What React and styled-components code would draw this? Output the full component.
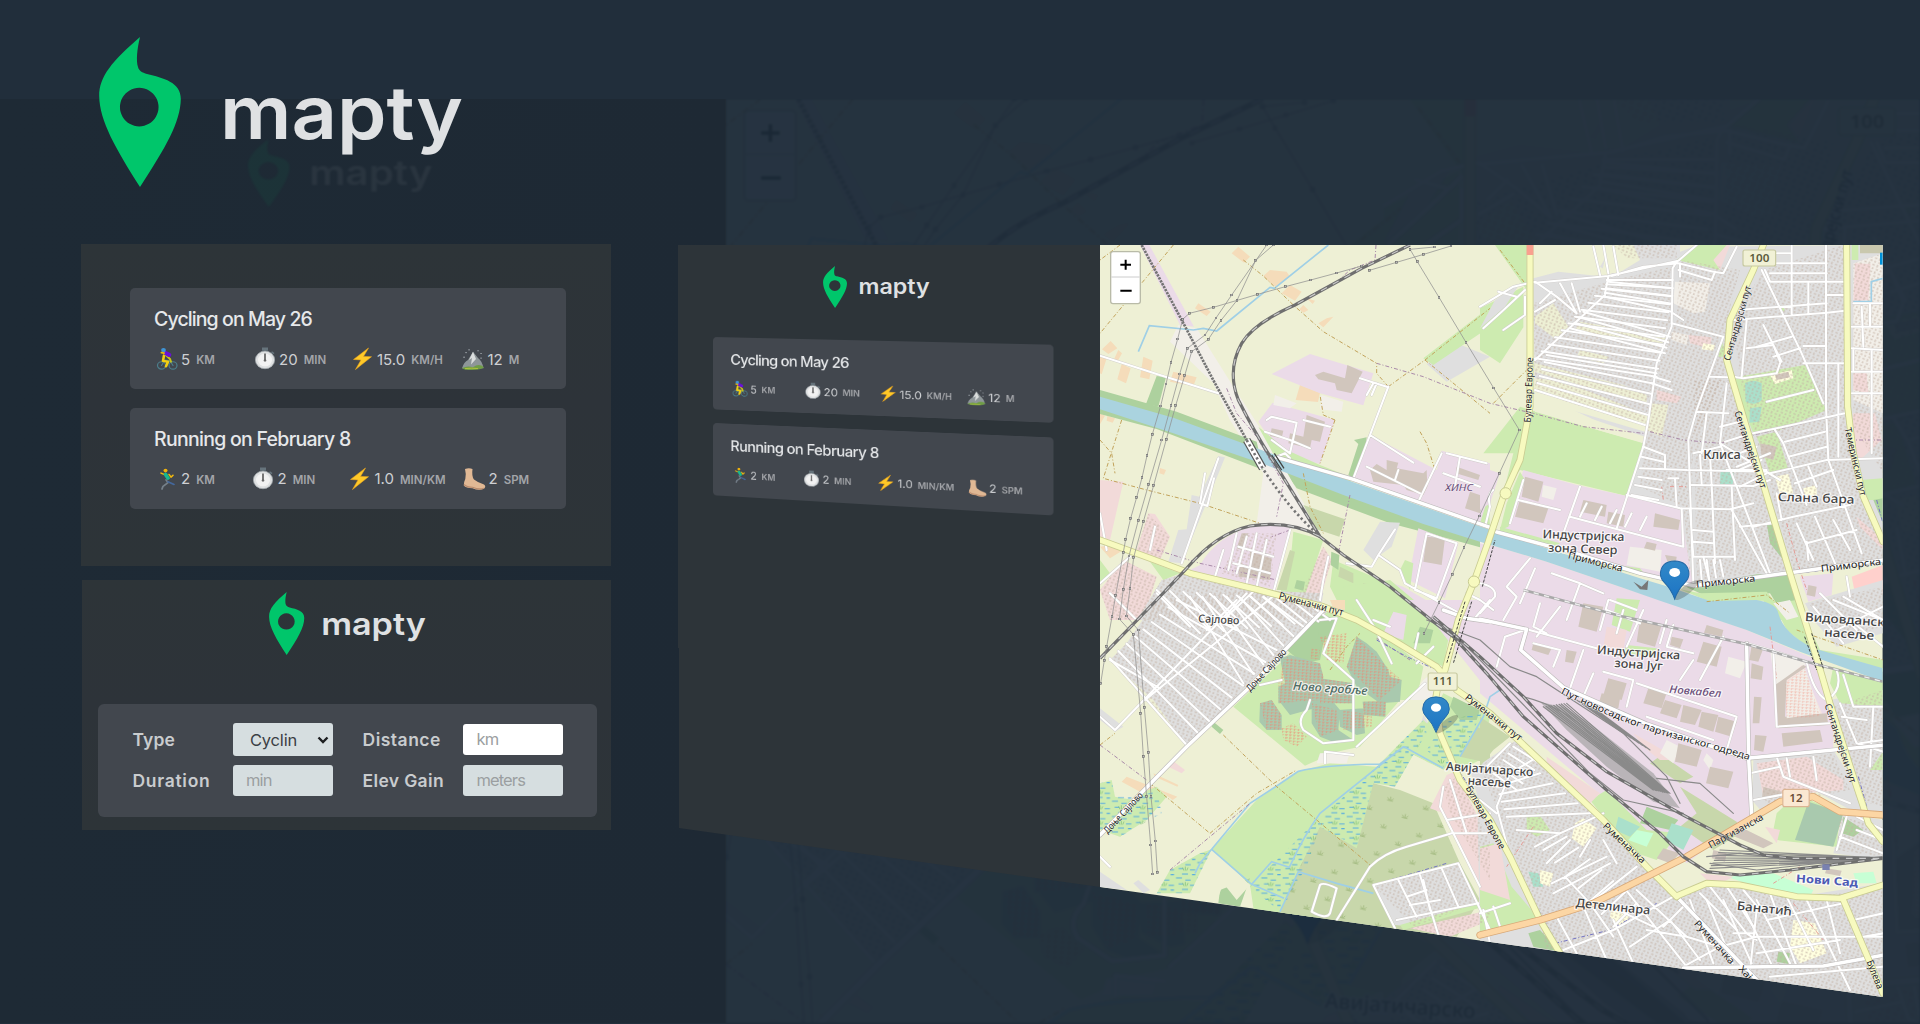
import React from 'react';
import styled, { createGlobalStyle } from 'styled-components';

const GlobalStyle = createGlobalStyle`
  * { box-sizing: border-box; }
  body { margin: 0; background: #212e3b; font-family: Inter, "Open Sans", sans-serif; }
`;

const Stage = styled.div`
  display: grid;
  grid-template: 1024px / 1920px;
  overflow: hidden;
  background: #212e3b;
`;

/* ---------- faded backdrop ---------- */
const Backdrop = styled.div`
  grid-area: 1 / 1;
  display: grid;
  grid-template-columns: 725.5px 1fr;
  margin-top: 99px;
  height: 924px;
  overflow: hidden;
  background: #1c2a38;
`;
const BackdropSide = styled.div`
  background: linear-gradient(90deg, #1e2a35, #1e2934);
  padding: 40px 0 0 248px;
`;
const BackdropLogo = styled.div`
  opacity: 0.06;
  filter: blur(0.8px);
  height: 68px;
`;
const BackdropMap = styled.div`
  overflow: hidden;
  opacity: 0.045;
  filter: blur(1px);
`;

/* ---------- foreground ---------- */
const Content = styled.main`
  grid-area: 1 / 1;
  display: flex;
  flex-direction: column;
  padding: 37px 37px 0 81px;
  z-index: 1;
`;
const Header = styled.header`
  height: 207px;
  padding-left: 18px;
`;
const Columns = styled.div`
  display: flex;
  align-items: flex-start;
  gap: 67px;
`;
const Previews = styled.section`
  width: 530px;
  display: flex;
  flex-direction: column;
  align-items: flex-end;
  gap: 14px;
`;
const Panel = styled.div`
  width: ${(p) => p.$width}px;
  height: ${(p) => p.$height}px;
  background: linear-gradient(#2d3438, #2d3339 50%, #2d3438);
  padding: ${(p) => p.$pad};
  display: flex;
  flex-direction: column;
`;
const PanelLogo = styled.div`
  height: 63px;
  padding-left: 171px;
`;
const List = styled.div`
  width: 436px;
  display: flex;
  flex-direction: column;
  gap: 18.6px;
`;
const TiltedList = styled(List)`
  transform-origin: 0 0;
  transform: matrix3d(0.72388, 0.01651, 0, -0.00016766, 0, 0.7163, 0, 0, 0, 0, 1, 0, 0, 0, 0, 1);
`;
const Card = styled.article`
  height: 101.4px;
  border-radius: 5px;
  background: #42474e;
  padding: 20px 0 0 24px;
`;
const Title = styled.h2`
  margin: 0;
  font-size: 19.5px;
  line-height: 23px;
  font-weight: 500;
  letter-spacing: ${(p) => p.$track}px;
  color: #e6e8ea;
  white-space: nowrap;
`;
const Stats = styled.div`
  display: grid;
  grid-template-columns: ${(p) => p.$cols};
  margin-top: 16px;
  height: 24px;
`;
const Stat = styled.div`
  display: flex;
  align-items: center;
  white-space: nowrap;
  svg { width: 22px; height: 22px; flex: none; overflow: visible; margin-left: 1.5px; }
`;
const Value = styled.span`
  margin-left: 3.5px;
  font-size: 15px;
  color: #ced0d3;
`;
const Unit = styled.span`
  margin-left: 6px;
  padding-top: 2px;
  font-size: 11.5px;
  font-weight: 600;
  color: #a3a5a9;
`;

const FormCard = styled.form`
  width: 499px;
  height: 113px;
  border-radius: 6px;
  background: #42474e;
  padding: 19.5px 34px 0 34.5px;
  display: grid;
  grid-template-columns: 100px 130px 100.5px 100px;
  grid-template-rows: 33px 31px;
  row-gap: 9px;
  margin-top: 48.5px;
`;
const Label = styled.label`
  font-size: 17.5px;
  font-weight: 600;
  color: #c9ccce;
  align-self: center;
  letter-spacing: ${(p) => p.$track}px;
  white-space: nowrap;
`;
const Field = styled.div`
  width: 100px;
  height: 30.5px;
  align-self: center;
  border-radius: 3px;
  background: ${(p) => (p.$active ? '#ffffff' : '#d6dee0')};
  color: #9b9fa1;
  font-size: 16.5px;
  line-height: 30px;
  letter-spacing: -0.9px;
  padding-left: 13.5px;
`;
const Select = styled.div`
  width: 100px;
  height: 33px;
  border-radius: 3px;
  background: #d6dee0;
  color: #3b4044;
  font-size: 16.5px;
  letter-spacing: -0.2px;
  display: flex;
  align-items: center;
  justify-content: space-between;
  padding: 0 4px 0 17.5px;
`;

const Showcase = styled.section`
  width: 1205px;
  height: 753px;
  margin-top: 1px;
  display: flex;
  clip-path: polygon(0 0, 1204.6px 0, 1204.6px 752px, 422px 642px, 1px 583px, 1px 403px, 0 403px);
`;
const Sidebar = styled.aside`
  width: 422px;
  height: 753px;
  background: #2d3439;
  padding: 21px 0 0 35px;
`;
const SidebarLogo = styled.div`
  height: 71px;
  padding-left: 110px;
`;
const MapFrame = styled.div`
  width: 783px;
  height: 752px;
`;
const MapSvg = styled.svg`
  display: block;
  width: ${(p) => p.$w}px;
  height: ${(p) => p.$h}px;
  font-family: "Noto Sans", "Open Sans", sans-serif;
`;
const LogoSvg = styled.svg`
  display: block;
  width: ${(p) => p.$w}px;
  height: ${(p) => p.$h}px;
  overflow: visible;
  font-family: Inter, "Open Sans", sans-serif;
`;

function Logo({ w, h }) {
  return (
    <LogoSvg $w={w} $h={h} viewBox="0 0 363 150" preserveAspectRatio="none">
      <path
        fill="#00c66b"
        fillRule="evenodd"
        d="M41 0C38 12 37 24 39 30C40 34 43 35.5 48 37C64 41 82 45 81.8 62C81.5 85 67 110 41 150C17 112 .5 84 .2 59C0 40 13 24 41 0ZM40.2 50.8A19.3 19.3 0 1 0 40.3 50.8Z"
      />
      <text x="121" y="101.5" fontSize="74" fontWeight="600" fill="#dfe1e3" textLength="243" lengthAdjust="spacingAndGlyphs">mapty</text>
    </LogoSvg>
  );
}

/* ---------- activity icons ---------- */
const ICONS = {
  bike: (
    <g fill="none" strokeLinecap="round" strokeLinejoin="round">
      <g stroke="#4c7f8c" strokeWidth="1.2">
        <circle cx="5.5" cy="19" r="4" /><circle cx="17" cy="19" r="4" />
        <path d="M5.5 19L9 13L14 14L17 19M10 19L14 14" />
      </g>
      <path d="M8 8L7 14L12 15L10 20" stroke="#f2cf12" strokeWidth="2.600" />
      <path d="M9 7L14 12L15 15" stroke="#c7c417" strokeWidth="2" />
      <path d="M9.5 5.5L13 7.5" stroke="#6a10d8" strokeWidth="4.500" />
      <circle cx="7.5" cy="2.3" r="2.400" fill="#3f94d6" />
      <path d="M5.500 5L8 5.500" stroke="#e7b80d" strokeWidth="2" />
    </g>
  ),
  run: (
    <g fill="none" strokeLinecap="round" strokeLinejoin="round">
      <path d="M10 13L12 16L7 20L6 23" stroke="#75808a" strokeWidth="1.800" />
      <path d="M12 15L18 18" stroke="#44689c" strokeWidth="1.800" />
      <path d="M8 7L5 5.500M13 7L15 10L17 8" stroke="#f2b90c" strokeWidth="1.600" />
      <path d="M9.500 7L12 11" stroke="#17b890" strokeWidth="3.800" />
      <circle cx="9.500" cy="2.800" r="2" fill="#efb20c" />
    </g>
  ),
  watch: (
    <g>
      <path d="M8 -.5h6v3.500h-6zM18 3.500l2.500 2l-1 1.300l-2.500-2z" fill="#66747c" />
      <circle cx="11" cy="13" r="9.600" fill="#dfe1e2" stroke="#a4aaae" strokeWidth=".8" />
      <circle cx="11" cy="13" r="7" fill="#f2f2f2" />
      <path d="M11 6v8" stroke="#686868" strokeWidth="1.800" />
      <circle cx="11" cy="13.500" r="1.300" fill="#686868" />
    </g>
  ),
  bolt: <path d="M16.500 0L1.500 12.500L9 13L3.500 23.500L19.500 9.500L11.500 9.200Z" fill="#ffc928" stroke="#f0a81c" strokeWidth=".6" />,
  peak: (
    <g>
      <path d="M0 22Q2 15 6 13L11 4L16 11Q20 14 21.500 22Z" fill="#8e9699" />
      <path d="M11 4L7 13L10 11L9 18L14 12Z" fill="#dadddd" />
      <path d="M0 22Q5 19 11 21Q17 16 22 21Q19 24 10 24Q2 24 0 22Z" fill="#6f9d46" />
      <path d="M3 22.500Q10 21.500 16 22.500" stroke="#b3c33c" fill="none" />
      <path d="M4 5h.1M7 2h.1M16 3h.1M19 6h.1M2 10h.1M19 11h.1" stroke="#c3cbd0" strokeWidth="1.200" strokeLinecap="round" />
    </g>
  ),
  foot: (
    <g>
      <path d="M2 1Q6 -.5 9.500 1Q8.500 9 11 12.500Q15 16 21 18Q23.500 20 21 22.500Q16 25 9.500 22Q3 22 .8 19Q.5 16 2.300 12Q3.500 7 2 1Z" fill="#e0b894" />
      <path d="M1 18Q4 21 9.500 21Q16 24 21 22" stroke="#b98b6d" strokeWidth="1.200" fill="none" />
    </g>
  ),
};

const WORKOUTS = [
  {
    title: 'Cycling on May 26', track: -0.9, cols: '98px 98px 110.5px 1fr',
    stats: [['bike', '5', 'KM'], ['watch', '20', 'MIN'], ['bolt', '15.0', 'KM/H'], ['peak', '12', 'M']],
  },
  {
    title: 'Running on February 8', track: -0.72, cols: '96.5px 97px 114px 1fr',
    stats: [['run', '2', 'KM'], ['watch', '2', 'MIN'], ['bolt', '1.0', 'MIN/KM'], ['foot', '2', 'SPM']],
  },
];

const Workouts = () =>
  WORKOUTS.map((w) => (
    <Card key={w.title}>
      <Title $track={w.track}>{w.title}</Title>
      <Stats $cols={w.cols}>
        {w.stats.map(([icon, value, unit]) => (
          <Stat key={icon}>
            <svg viewBox="0 0 22 24" preserveAspectRatio="none">{ICONS[icon]}</svg>
            <Value>{value}</Value>
            <Unit>{unit}</Unit>
          </Stat>
        ))}
      </Stats>
    </Card>
  ));

/* ---------- map: four tiles, 3 units per pixel ---------- */
const TILES = { A: 'translate(0 0)', B: 'translate(1170 0)', C: 'translate(0 1080)', D: 'translate(1170 1080)' };

const hatch = (a, b, c, d, n) => {
  let out = '';
  for (let i = 0; i <= n; i += 1) {
    const t = i / n;
    const m = (p, q) => `${(p[0] + (q[0] - p[0]) * t).toFixed(0)} ${(p[1] + (q[1] - p[1]) * t).toFixed(0)}`;
    out += `M${m(a, b)}L${m(c, d)}`;
  }
  return out;
};

const FARM = '#eef0d5', GRASS = '#cdebb0', WOOD = '#add19e', IND = '#ebdbe8', RES = '#dfdfdf', WATER = '#aad3df';
const PINK = '#f2dad9', ORANGE = '#f5dcba', SCRUB = '#c8d7ab', BARE = '#f2efe9', BLDG = '#d1c6bd', PITCH = '#aae0cb', YEL = '#ffffe0';

const LAND = {
  A: [
    [IND, 'M150 15H178L312 260L270 255Z'],
    [BARE, 'M265 255L320 265L430 440L560 640L690 880L500 850L520 700L420 540L370 430L240 305Z'],
    [ORANGE, 'M445 20L480 50L462 68L425 40ZM540 90L590 95L600 110L555 140L520 108ZM600 135L635 155L615 182L575 160ZM325 190L362 215L350 228L315 205ZM710 235L730 230L700 262L685 250ZM62 303L82 325L55 342L36 328ZM30 350L50 355L35 403L30 400ZM85 330L96 340L82 365L72 358ZM160 350L188 362L178 418L150 412ZM95 372L122 385L108 430L82 418ZM250 395L320 412L310 438L240 425ZM630 435L690 458L684 486L617 480ZM30 520L45 527L30 553ZM52 528L75 535L68 548L50 542ZM210 684L228 690L222 704L208 700ZM650 175L675 182L668 192ZM640 195L655 210L640 218L628 208ZM30 920L80 912L100 930L60 955Z'],
    [WOOD, 'M200 408L228 412L205 500L168 492ZM792 600L830 592L828 612L795 720L775 705L805 612Z'],
    [IND, 'M545 402L660 342L850 400L820 496L690 460ZM548 488L735 540L690 672L570 640L505 545ZM840 585L1040 690L1055 632L1200 670V800L1190 855L790 715ZM330 975Q380 890 480 862Q560 850 600 865L555 1050L300 990ZM985 865L1105 910L1065 1075L955 1020ZM850 1010L940 1040L1110 1140H1030Z'],
    [PINK, 'M30 720L100 725L60 900L30 890ZM175 820L195 822L240 890L210 960L140 930ZM700 920L725 960L690 1080L620 1080ZM30 1050L100 960L200 1010L160 1140H60Z'],
    [RES, 'M385 648L405 652L345 800L275 970L235 965L265 870L290 868L305 765L328 770ZM1100 310L1200 350L1070 425L1010 372ZM870 845L930 848L905 920L850 960L820 930ZM215 1020L300 995L560 1060L720 1110L700 1140H140Z'],
    [GRASS, 'M505 560L590 630L690 675L790 715L780 730L560 660ZM1000 355L1200 200V260L1030 375ZM610 875L700 900L640 1080L570 1060L600 980ZM730 960L850 1010L1000 1110L1010 1140H770L720 1040ZM180 965L270 1000L220 1020ZM945 960L970 970L960 1050L930 990ZM1195 770L1200 860L1170 850ZM30 960L60 1000L30 1030Z'],
    [SCRUB, 'M640 795L765 838L748 890L680 868ZM600 930L615 935L590 1050L560 1050Z'],
    [BARE, 'M555 465L620 490L600 505L550 495ZM695 465L760 485L755 515L690 508Z'],
    [BLDG, 'M675 405L700 395L765 415L772 375L818 395L785 460L740 450L735 430L685 418ZM650 525L705 545L690 605L665 600L660 625L595 610L600 580L640 590ZM545 565L580 572L575 595L540 588ZM890 660L925 668L920 685L1000 700L1010 690L1012 740L1000 765L950 750L940 735L850 725L840 690L860 672L890 690ZM1100 680L1170 705L1165 720L1098 700ZM1140 755L1185 770L1170 820L1125 805ZM1010 890L1065 895L1055 975L1000 965ZM455 880L475 880L455 930L440 925ZM480 935L545 955L540 1020L445 1010L450 970L480 980Z'],
    [SCRUB, 'M750 980L790 1000L790 1030L745 1010ZM820 1030L845 1035L825 1090L790 1110Z'],
    [WOOD, 'M724 935L748 945L745 990L722 975ZM620 1020L645 1025L640 1052L613 1045Z'],
  ],
  B: [
    [GRASS, 'M45 15H140V150ZM0 205L130 140V262L60 370L0 330ZM10 640L120 500L300 555L490 608L440 768L120 690L70 760L100 640Z'],
    [RES, 'M45 180L120 130L75 200L0 265ZM160 115L235 95L390 112L485 80L640 20L1209 15V970L930 1000L640 1035L600 810L440 770L490 610L165 455L160 180Z'],
    [RES, 'M400 15H600V60L410 110L360 80Z'],
    [FARM, 'M385 15H460L480 60L415 100L365 100ZM300 245L560 290L540 320L285 270ZM300 330L385 350L370 370L290 350ZM165 370L430 435L500 465V495L165 395ZM165 415L215 420L330 455L505 525L495 575L240 500L165 470ZM165 480L495 590L490 610L165 515ZM510 490L565 495L545 590L500 570ZM165 230L220 190L265 260L230 300L165 250Z'],
    [BARE, 'M585 125L690 130L675 215L640 220L580 190ZM575 275L625 285L620 315L575 300Z'],
    [PINK, 'M680 20L750 15L720 90L700 70ZM625 285L695 292L690 325L630 310ZM530 450L605 470L590 490L530 480ZM1120 520L1185 520L1205 600L1140 660L1110 600ZM1130 830L1209 900L1209 930L1140 860ZM655 1030L700 1030L700 1060L650 1060Z'],
    [GRASS, 'M590 60L650 15L740 15L700 60L720 90ZM775 410L975 375L1005 440L1040 510L900 570L820 580L780 480L760 420ZM830 590L890 575L925 690L870 700L850 640ZM725 305L745 350L715 350ZM905 195L915 210L905 220ZM1115 15H1135V60H1115ZM1140 720L1209 715V780H1165Z'],
    [PITCH, 'M795 430Q820 415 845 430V480Q825 500 797 485ZM810 505L845 500L838 545L808 548ZM722 688L762 688L758 733L720 733ZM900 712L920 712L922 745L905 750Z'],
    [YEL, 'M670 310L705 315L700 332L665 328ZM870 405L935 390L940 415L885 432ZM885 710L925 702L940 760L900 765ZM970 745L1010 735L1010 765L975 770Z'],
    [IND, 'M130 690L290 735L440 768L600 805L640 1035L350 960L60 875L90 830ZM0 905L200 965L420 1040L720 1140H0ZM960 1010L1060 1000L1055 1065L985 1085ZM0 680L60 700L30 790L0 810Z'],
    [GRASS, 'M120 695L135 720L85 860L60 870L80 790ZM20 950L110 980L60 1030L0 1010ZM430 1085L490 1100L460 1140H410ZM60 860L240 910L220 925L60 885ZM310 960L480 985L500 1010L290 960Z'],
    [BARE, 'M450 920L545 930L540 995L440 975ZM190 735L230 745L220 780L185 770ZM0 870L30 880L20 950L0 960Z'],
    [BLDG, 'M135 710L190 725L175 785L125 770ZM118 785L205 805L190 850L105 830ZM310 780L380 795L375 830L300 815ZM385 815L435 825L430 860L380 850ZM500 905L530 912L525 932L492 925ZM150 1005L215 1035L195 1090L130 1060ZM325 1075L395 1095L380 1140H305ZM555 945L590 950L585 990L570 985ZM885 405L925 395L930 412L890 420ZM840 610L890 620L880 660L845 650ZM985 1035L1010 1040L1005 1070L980 1065ZM525 820L600 840L595 870L520 860Z'],
    [WOOD, 'M620 1042L830 1003L930 1000L968 1140H920L870 1060L700 1078ZM1180 780L1209 775V850ZM860 850L885 850L890 900L910 960L870 910Z'],
    [GRASS, 'M600 1048L660 1060L860 1055L930 1140H890L850 1082L690 1085Z'],
    ['#c9c8ae', 'M1140 15H1209V40H1140Z'],
    [BARE, 'M1120 70L1209 40V520L1120 480Z'],
    [PINK, 'M1125 70L1172 72L1165 180L1120 185ZM1120 400L1160 400L1165 460L1120 450Z'],
    ['#ffd0cc', 'M1115 1010L1209 975V1060L1130 1085Z'],
  ],
  C: [
    [RES, 'M205 -10L480 -30L700 -20L690 40L290 440L190 300L60 180L110 130Z'],
    [RES, 'M30 325L100 380L75 395L30 360ZM30 815L110 870L30 862ZM1000 345L1030 395L1045 410L1015 440L970 430L985 400ZM1140 510L1200 480V720ZM145 840L180 870L160 880L130 850Z'],
    [ORANGE, 'M110 530L262 590L248 600L200 565L175 580L150 575L95 545ZM190 520L265 555L262 560L195 530ZM720 0H765V30L730 25Z'],
    [GRASS, 'M580 180L680 60L720 30L800 60L900 120L1000 200L980 300L930 300L810 440L740 455L645 497L430 320ZM760 -40L900 -60L1080 90L1060 200L900 115L800 50ZM620 515L720 490L860 500L830 700L650 990H500L480 855L365 748L500 600ZM1060 280L1200 350L1170 480L1130 500L1010 490L985 420ZM30 550L65 540L75 590L130 600L150 580L200 560L230 590L170 660L90 710L30 690Z'],
    [GRASS, 'M860 500L1000 360L1040 400L1100 470L1060 510L970 465L920 560L850 550L800 740L650 800L570 935L480 860L600 700ZM330 760L365 748L300 880L200 880L240 810Z'],
    [WOOD, 'M590 150L690 40L740 60L700 130L690 180L640 190ZM370 365L400 390L390 402L365 380ZM390 870L480 835L450 920L385 910ZM1090 290L1170 330L1160 360L1110 360L1080 320ZM990 80L1030 90L1020 130L970 130Z'],
    [FARM, 'M970 465L1060 510L1020 605L915 560ZM370 750L480 855L440 900L400 850L380 905L310 880Z'],
    [FARM, 'M820 440L1000 270L1020 290L870 470L820 470L640 500L810 465Z'],
    [SCRUB, 'M850 550L930 570L1030 610L1070 700L1110 790L1170 900L1100 1010L860 985L570 940L625 810L690 680L800 745Z'],
    [SCRUB, 'M1160 380L1200 400V490L1110 470Z'],
    [BARE, 'M1000 240L1040 210L1050 280L1000 300L960 300ZM690 460L780 455L770 490L680 490Z'],
    [IND, 'M910 35L950 45L940 120L880 100ZM1000 0H1200V280L1030 65L950 0Z'],
    [PINK, 'M1070 525L1095 515L1200 720V860L1175 870L1060 640L1020 625ZM245 480L285 510L275 520L235 500ZM960 985L1200 930V960L1080 1010Z'],
    [RES, 'M850 855L1105 790L1165 910L970 980L915 975Z'],
    [GRASS, 'M930 975L1160 910L1165 925L940 990Z'],
    ['#a9c9ae', 'M570 175L600 165L690 190L700 230L690 300L640 310L565 310V260L585 250ZM800 110L830 130L860 155L895 210L900 230L935 240L930 305L870 310L800 260L770 200ZM690 235L790 250V310H690ZM510 310L545 300L575 345L575 390L530 390L508 365ZM565 300H690V320L600 345ZM665 310L725 300L750 330L745 390L790 420L740 430L690 410L665 370ZM745 330L820 325L825 400L800 405L750 380ZM818 305L888 303L886 350L822 345Z'],
    [WOOD, 'M690 50L735 70L715 120L685 110Z'],
  ],
  D: [
    [IND, 'M0 -170L540 0L800 90L1000 175L1060 340V450L810 480L815 640L620 790L380 600L0 280Z'],
    [RES, 'M-10 500L110 420L370 665L510 800L590 890L690 850L950 890L1209 850V1200L0 1030Z'],
    [RES, 'M975 10L1209 -60V100L1070 140L1000 60ZM1050 300L1209 270V650L1130 640ZM820 480L1060 450L1130 560V640L1000 570L850 640L815 600ZM1090 640L1209 660V780L1060 760Z'],
    [GRASS, 'M880 10L950 0L1020 150L1209 180V215L1010 165L920 90ZM1060 200L1209 245V320L1080 310L1050 250ZM410 -5L480 0L450 95L395 75ZM440 135L530 145L520 170L430 160ZM890 640L910 620L990 600L1080 640L1070 740L890 720L880 690ZM330 600L380 570L500 690L600 700L530 780L470 760L370 650ZM0 740L40 730L95 860L180 960L0 1000ZM140 650L175 640L210 690L170 710L140 690ZM1209 455L1170 510H1209Z'],
    [SCRUB, 'M510 490L545 465L640 530L600 550ZM600 560L770 665L780 700L700 750L600 680L650 640ZM0 350L90 410L40 450L0 500Z'],
    [WOOD, 'M500 620L595 660L570 690L480 670ZM1090 650L1150 690L1120 710L1085 700ZM145 1000L180 990L240 1055L160 1040ZM895 1055L930 1060L925 1092L890 1085Z'],
    ['#a9c9ae', 'M985 605L1090 640L1060 740L945 720Z'],
    ['#c7ffd5', 'M740 830L880 820L1000 870L990 890L860 870ZM1120 820L1180 815L1190 850L1130 850ZM470 690L520 700L500 740L445 720Z'],
    [PITCH, 'M415 650L480 680L450 710L405 690ZM575 670L640 690L610 750L555 720ZM145 815L175 820L190 860L160 860ZM985 1010L1015 1010L1015 1060L990 1055Z'],
    [PINK, 'M0 745L60 730L90 900L0 870ZM200 470L360 580L320 620L200 510ZM460 400L600 480L540 480L490 440ZM830 490L980 470L1090 540V570L850 590ZM380 80L440 90L430 150L370 140ZM660 820L760 830L700 860ZM855 680L900 690L890 730Z'],
    [YEL, 'M285 670L310 655L350 685L310 740L275 715ZM940 960L1005 970L1040 1060L960 1090L930 1040ZM180 810L220 820L210 860L180 850ZM395 920L450 950L420 980L390 950Z'],
    [BARE, 'M870 150L980 190L890 290ZM745 170L800 185L780 235L735 220ZM560 420L600 440L580 490L540 460ZM680 460L700 480L690 510L670 480ZM880 10L930 0L955 50L920 60Z'],
    ['#f5e4df', 'M965 195L1030 350L920 360L915 240Z'],
    [BLDG, 'M970 195L980 200L920 240L915 350L1040 340L1045 375L895 385L885 255ZM310 10L370 20L350 95L295 80ZM480 60L545 75L525 140L470 125ZM670 125L725 140L710 200L650 185ZM385 235L440 250L425 300L370 285ZM365 280L420 295L415 325L355 315ZM260 150L290 155L280 190L255 185ZM505 265L560 278L545 325L490 310ZM555 300L605 315L590 355L540 340ZM610 315L665 330L645 375L600 365ZM665 335L715 345L700 395L655 380ZM715 350L770 365L755 410L705 395ZM595 430L665 450L650 500L585 485ZM690 500L760 515L745 565L678 550ZM815 135L850 145L835 185L808 180ZM815 190L850 200L845 240L812 235ZM822 290L845 292L838 370L818 370ZM825 405L860 408L850 455L822 450ZM160 130L215 145L205 165L155 150ZM575 110L610 118L600 145L570 135ZM680 75L730 90L725 110L672 98ZM905 400L1020 390L1028 425L910 440ZM700 750L740 760L735 785L695 775ZM550 745L600 760L570 790L530 775ZM780 680L880 730L850 745L765 710ZM850 560L905 575L900 590L845 600ZM1040 805L1085 812L1080 828L1035 820Z'],
    [BARE, 'M920 250L975 205L1020 340L920 355Z'],
  ],
};

/* residential blocks that carry the small-building texture */
const BLOCKS = {
  A: ['M215 1020L300 995L560 1060L720 1110L700 1140H140Z', 'M30 1050L100 960L200 1010L160 1140H60Z', 'M700 920L725 960L690 1080L620 1080Z', 'M175 820L240 890L210 960L140 930Z', 'M460 880L560 880L540 1040L390 1000Z'],
  B: ['M160 190L380 125L575 80L575 260L525 380L495 560L165 455Z', 'M600 60L780 90L740 240L740 400L640 600L630 1020L610 800L480 740L500 560L540 340L590 230Z', 'M850 90L1090 15L1100 560L1140 760L1209 910V960L940 990L870 740L780 420L760 240Z', 'M640 420L760 420L860 760L920 990L650 1020Z', 'M1120 70L1209 40V700L1120 560Z', 'M400 15H590V55H440Z'],
  C: ['M205 0L480 -30L700 -20L660 60L290 440L60 180L110 130Z', 'M1060 560L1100 530L1200 720V840L1080 640Z', 'M850 855L1105 790L1165 910L970 980Z', 'M960 985L1200 930V960L1080 1010Z'],
  D: ['M0 500L110 420L370 665L510 800L590 890L690 850L950 890L1209 870V1200L200 1060L180 960Z', 'M1060 320L1209 270V620L1130 600Z', 'M1080 650L1209 680V770L1070 750Z', 'M985 10L1209 -40V80L1080 120Z', 'M830 490L1060 460L1110 570L860 620Z'],
};

const MINOR = {
  A: [
    'M30 347L200 402L385 460M385 655L275 970M345 700L330 790L352 798L372 715M600 870L552 1050M915 868L865 945L845 980L770 970M865 945L930 990L945 1030L1100 1115M895 440L840 585L790 715M840 585L970 668M560 650L585 640L600 655M1055 640L985 785M1070 640L1190 670M1060 700L1170 740M1110 650L1095 740M530 540L545 530L620 548L600 640M640 540L720 560M525 575L600 600L660 625M545 600L600 640M810 415L890 440M850 430L830 465M860 430L845 465M400 930L375 1010M440 880L415 990M470 890L440 1000M500 880L470 1030M530 900L500 1040M445 920L550 950M430 970L540 1000M830 680L990 760M925 690L915 720M1010 880L1100 910L1040 1075L975 1050ZM715 950L700 1020L690 1080M195 860L180 930M30 820L50 930',
    hatch([200, 1050], [640, 1080], [330, 1180], [720, 1140], 11),
    'M500 1045L400 1140M440 1080L350 1170M30 1030L120 950M60 1060L140 1140M200 1060L300 1160',
  ],
  B: [
    'M0 200L100 140L165 125L230 170L290 220M165 128L385 108L595 62L650 15M375 165L165 360M385 110L375 160M590 65L578 85L575 260L530 370L505 540L490 620L410 865M395 108L490 80L595 70L700 95M700 95L730 100L770 20M595 90L695 120L705 95M600 70V110M290 220L240 130M275 130L300 215M340 20L360 105M370 15L385 100M400 20L415 105M10 265L65 215L135 150M70 270L135 225L135 170M165 215L225 180M180 190L215 155M55 155L110 170',
    hatch([385, 125], [165, 355], [578, 145], [530, 410], 11),
    hatch([200, 345], [165, 450], [530, 400], [495, 555], 5),
    hatch([380, 120], [375, 170], [578, 120], [575, 215], 4),
    hatch([310, 215], [270, 265], [570, 290], [555, 340], 3),
    'M575 250L730 290M580 220L610 240M520 410L570 425M515 430L575 450M730 290L650 510L625 600L640 1030M740 430L720 610L900 720M650 515L745 520M690 410L745 412M760 410L790 415L890 400L900 370M800 240L785 410M760 240L1040 218L1095 212M845 90L965 340L1030 490M770 210L1040 190M855 90L870 125H1095M870 100H1040M890 70H1040M935 15V225M985 130V220M1038 15V500L1045 660L1145 940M1040 165H1095M890 40H930M970 318H1038M830 320L935 290M850 255L905 365M880 350L960 325M800 325L880 315L900 365M970 370H1095M860 485L1000 450M1075 370V650M820 580L1095 520M885 570L910 610L980 795M915 605L1035 575M925 650L1040 620M870 700L1040 660M945 730L1060 690M985 680L1010 740M620 690L860 695M635 735L820 738L870 720M605 805L750 808L820 790M480 685L620 690M475 710L545 720M465 735L545 750M455 765L535 780M490 620L555 645V685M485 650L550 665M660 645L665 730M690 645L695 735M680 520L665 640M720 610L870 1000M720 620L640 640M740 690L860 690M770 680L870 640M695 735L705 970M755 740L765 960M640 870L700 875M640 905L700 910M640 950L760 950M820 860L940 830L1110 795M780 860L880 850M755 810L860 1000M905 840L890 760M980 910L1130 870M950 850L1000 960M1005 830L1065 970M1060 840L1110 930M985 960L980 905M670 950L690 1030M565 715H595M585 715L590 800M605 805L610 920M630 810L640 950M440 765L600 805M270 830L610 920M300 740L250 880M115 780L240 810M130 720L90 850M1120 190H1209M1145 200L1150 320M1170 190V260M1115 260H1209M1115 325L1209 330M1115 395H1209M1175 400V640M1115 460H1209M1040 660L1209 655M1120 325V390M1175 330V395M0 1030Q50 1040 45 1070L0 1120M40 750Q20 760 30 800L15 860M150 955L80 1040L110 1070L70 1140M165 985L120 1090M215 1000L300 1030L260 1140M300 1030L370 1060M390 1080L470 1110M1060 1080L1209 1140M1100 1010L1110 1070',
    hatch([720, 560], [780, 740], [800, 540], [860, 700], 4),
    hatch([660, 960], [720, 960], [665, 1020], [730, 1010], 3),
    hatch([320, 790], [500, 830], [300, 830], [480, 870], 4),
  ],
  C: [
    'M470 -20L75 390L30 350M560 -20L165 300M60 180L210 265M690 60L740 55L700 160L790 240L790 420L700 430L640 390Q620 360 650 330L660 300M800 440L1005 250M790 465L705 455V490M800 0L855 85L905 190M740 960L840 800Q880 760 950 740L1085 700M665 935L690 855Q700 845 740 865L720 940Q710 960 665 935M850 60L900 80M1060 560L1050 620L1100 720L1170 860M1070 660L1200 640M1090 700L1200 700M1080 540L1130 700M1150 60L1200 0M510 255L575 240M30 770L60 800M985 100L970 170M1030 140L980 190',
    hatch([60, 175], [260, 0], [290, 435], [560, 150], 8),
    hatch([300, -10], [520, -10], [460, 250], [640, 80], 6),
    'M850 855L915 985M925 840L980 950M990 825L1045 1005M1055 805L1105 920M1105 790L1200 990M850 855L1105 790M920 960L1165 910M950 890L1010 870M960 915L1050 900M1000 840L1020 930',
  ],
  D: [
    'M-40 -20L0 0L40 30M0 60L140 88L350 145M140 88L75 110L50 200M310 150L270 265M490 30L440 140M800 130L870 150L980 185L1015 190M880 150L890 380L1050 370M980 185Q1000 280 1040 300Q1090 270 1070 210M1080 310L1130 430L1209 455M1090 225L1120 320L1209 320M1085 350L1160 360M890 470L910 530L1110 610M920 475L930 530M1000 470L1010 540M810 520L900 500M820 600L930 580M160 130L240 150L220 200M385 0L360 90M430 30L410 100M560 60L540 130M580 75L560 140L640 160M640 180L600 240M730 110L660 240M470 250L770 350L740 450M340 220L310 290L350 320M370 215L460 240L440 320M380 30L480 70M500 350L700 420M180 10L160 80L200 100M240 20L170 110',
    'M50 640L0 600M165 475L90 520L50 620L90 770M90 430L20 500M240 700L370 640M165 740L240 700L110 690M200 790L270 720M215 850L380 770M220 880L390 790M255 830L330 910L400 1010M300 770L330 720M350 900L520 980M330 910L470 800M410 790L370 720M430 860L620 1100M470 870L620 1010M580 890L400 990L250 1050M620 910L550 980M450 1040L570 960L660 1080M230 950L290 1060M310 920L380 1080M400 960L460 1090M690 860L800 1000L830 1020M740 860L820 980M660 880L770 990M790 870L840 930M830 930L810 1110M760 1000L820 1000M870 880L950 1100M920 890L1000 1050M980 900L1110 1170M1040 900L1080 1060M860 960L1090 910M720 1040L830 1010L1209 1010M830 1060L1080 1020M1120 960L1209 940M1150 1010L1209 1000M610 1100L720 1040M10 930L30 1030M40 920L60 980M0 940L90 910M1100 650L1070 750M1130 690L1209 720M1080 710L1209 760M1130 650L1209 690M1000 20L1090 130M1020 -20L1130 90M1050 100L1209 20M1110 60L1209 140M1090 -10L1209 60M1180 320L1170 500M1140 430L1209 420M870 1130L1209 1100M500 990L620 1010L720 1040',
    hatch([100, 440], [40, 520], [180, 490], [110, 570], 4),
    hatch([50, 560], [80, 650], [180, 520], [330, 640], 4),
    hatch([190, 750], [400, 980], [260, 710], [470, 910], 6),
    hatch([630, 900], [830, 900], [700, 1090], [930, 1090], 4),
  ],
};

const MAJOR_WHITE = {
  A: ['M560 652L790 718L1200 862'],
  B: ['M50 876L280 938L480 1000L640 1037L830 1012L930 998L1209 960'],
  C: ['M30 705L290 440L470 270L700 30', 'M1060 30L1130 55L1200 65'],
  D: ['M0 58L140 88L122 150L250 262L500 372L800 475L1060 450L1209 436', 'M800 130L806 475L815 645', 'M590 890L840 1150', 'M610 1104L1030 1098L1209 1066'],
};
const YELLOW = [
  'M30 900L180 955L300 1000L500 1048L620 1080L700 1100L800 1140L900 1195L1040 1280L1100 1350L1200 1420L1285 1500L1370 1580L1540 1740L1670 1880L1760 1970',
  'M1320 15L1320 500L1290 660L1240 770L1195 905L1152 1025L1105 1140L1065 1290L1045 1330L1038 1370L1050 1480L1110 1620L1200 1740L1260 1850L1350 2040L1410 2140',
  'M2020 15L1990 90L1920 240L1910 360L1930 430L2040 800L2100 1000L2125 1080L2185 1270L2220 1390L2290 1610L2320 1700L2335 1750L2379 1805',
  'M2270 15L2273 500L2290 640L2320 770L2379 905',
  'M1760 1968L1850 1930L1950 1935L2120 1970L2250 1975L2379 1935',
  'M2258 1975L2379 2260',
];
const PRIMARY = 'M1170 2085L1350 2040L1510 1990L1680 1905L1790 1850L2070 1685L2170 1670L2250 1715L2379 1725';
const RAILS = [
  'M960 15L815 85L615 195Q490 250 455 310Q410 390 445 480Q500 590 560 680L690 890L760 945L900 1040L1030 1145L1090 1190L1190 1300L1300 1430L1550 1650L1710 1780L1780 1850L1850 1895L1950 1905L2100 1890L2379 1855',
  'M30 1255L200 1080L290 985Q380 880 480 858Q600 840 690 890',
  'M1030 1130L1170 1250L1300 1370L1400 1480L1550 1595L1770 1720L1950 1815L2020 1845L2110 1855L2379 1855',
];
const SIDINGS = [
  'M1010 1140L1170 1200L1260 1280L1340 1310L1600 1480L1730 1610L1770 1690M1100 1190L1170 1260L1500 1600L1600 1680L1780 1720M1300 1370Q1420 1400 1500 1480L1640 1580M1700 1615L1830 1630L1930 1720M1850 1850L1950 1840L2200 1870L2379 1850M1860 1870L2000 1890L2379 1850',
  hatch([1360, 1400], [1430, 1390], [1690, 1650], [1740, 1660], 9),
  hatch([1460, 1380], [1520, 1410], [1600, 1480], [1680, 1530], 7),
  hatch([1890, 1830], [1860, 1885], [2340, 1852], [2340, 1862], 7),
];
const POWER = [
  'M550 15L497 61L441 181L393 241L355 298L305 335L284 407L257 497L229 598L191 736L160 845L131 952L120 1046L109 1128L145 1170L163 1403L175 1537L183 1670L196 1803L202 1897',
  'M530 15L425 165L378 234L345 285L292 325L269 402L243 497L215 600L176 733L145 841L117 948L100 1048L88 1137L130 1183L152 1420L160 1550L170 1670L182 1815L188 1902',
  'M278 238L263 297L243 367L228 432L212 498L187 583L171 647L156 713L140 772L122 835L107 898L100 937L77 1066L66 1130L50 1220L43 1261L32 1330',
  'M278 238L298 220L370 202L503 163L586 140L662 120L740 99L815 78',
  'M838 91L920 67L1001 43L1083 18',
  'M960 28L1033 21', 'M960 28L982 65L1047 172L1128 307L1211 444L1288 570L1228 700L1168 828L1122 922L1087 1003L1047 1088L1002 1180',
];
const STREAMS = [
  'M145 335L178 257L310 270L340 265L380 273L540 142L553 145L715 15',
  'M2290 185H2344V125L2379 115',
  'M315 1900L330 1870L365 1828L480 1690L560 1638L625 1594Q700 1575 870 1572L942 1520L1060 1585M940 1520L690 1720Q640 1790 598 1882L545 1865L485 1933L365 1828M485 1933L582 1975M570 2015L625 1895L740 1930L850 1960M1110 1550L1180 1430L1200 1370L1230 1350',
];
const TRACKS = [
  ['#c2a35b', 'M250 15L30 280M90 15L30 60M460 60L520 108L610 195L700 275L860 370M895 440L1005 360L1200 205M895 440L860 400V370M735 540L700 525L690 465M735 540L690 670M990 575L1010 610L1035 690M95 540L40 715L170 750L330 790L510 850M640 700L660 800L700 880M1005 360L1200 520M30 600L65 640L75 700M30 1515L75 1480M400 1485L560 1640L680 1740L840 1875M360 1780L500 1660L620 1590M180 1630L360 1780M1210 490L1310 390M1230 30L1320 150M720 1290L770 1220L810 1180M1850 1085L2030 1065L2100 1120M2120 1170L2379 1260'],
  ['#a98aa9', 'M858 15L855 60L780 90L730 135M860 370L1000 410L1200 490L1330 520L1480 560L1660 580M410 445L440 520L500 590L580 730L560 830M780 765L745 940M600 870L545 890M200 930L330 970L560 1020M1680 575L1780 600L1890 610L1990 585L2270 520M30 1515L170 1620M240 1890L360 1790L480 1690M2280 600H2379M860 1195L960 1260'],
  ['#e59a94', 'M1715 740L1720 780M1740 740H1790M2010 700L2020 740M2090 850L2120 960L2150 1050M1330 1760L1250 1880M2050 1930L2130 1880M2110 1990L2200 2100M2040 1160L2060 1320'],
  ['#7474c2', 'M1395 2110L1560 2070L1700 1990M1040 1470L1100 1580L1200 1740L1340 2000L1400 2110M2305 1610L2330 1700M2120 1000L2200 990M850 1935L1070 1870M2360 780L2379 850M860 1200L950 1250L1030 1285'],
];

const NAMES = [
  // tile, x, y, angle, length, size, colour, text, style, shown in the backdrop
  ['A', 1107, 752, 0, 84, 29, '#6b4f7a', 'ХИНС', 'italic'],
  ['A', 661, 1102, 15, 200, 30, '#222', 'Руменачки пут'],
  ['B', 156, 450, -88, 195, 29, '#222', 'Булевар Европе'],
  ['B', 782, 252, -74, 232, 29, '#222', 'Сентандрејски пут', '', true],
  ['B', 802, 632, 71, 243, 29, '#222', 'Сентандрејски пут'],
  ['B', 1117, 667, 77, 208, 29, '#222', 'Темерински пут'],
  ['B', 726, 658, 0, 113, 36, '#444', 'Клиса'],
  ['B', 1008, 787, 2, 230, 36, '#444', 'Слана бара'],
  ['B', 310, 899, 2, 245, 36, '#444', 'Индустријска'],
  ['B', 308, 939, 2, 208, 36, '#444', 'зона Север'],
  ['B', 344, 975, 14, 168, 29, '#222', 'Приморска'],
  ['B', 738, 1034, -6, 178, 29, '#222', 'Приморска'],
  ['B', 1114, 985, -7, 182, 29, '#222', 'Приморска'],
  ['C', 386, 70, 3, 124, 33, '#444', 'Сајлово'],
  ['C', 720, 277, 4, 224, 35, '#4d6a62', 'Ново гробље', 'italic'],
  ['C', 536, 217, -47, 162, 29, '#222', 'Доње Сајлово'],
  ['C', 107, 645, -47, 157, 29, '#222', 'Доње Сајлово'],
  ['C', 1198, 520, 4, 262, 36, '#444', 'Авијатичарско', '', true],
  ['C', 1197, 558, 4, 130, 36, '#444', 'насеље'],
  ['C', 1205, 360, 38, 208, 29, '#222', 'Руменачки пут'],
  ['C', 1178, 657, 61, 213, 29, '#222', 'Булевар Европе'],
  ['D', 475, 170, 4, 250, 36, '#444', 'Индустријска'],
  ['D', 475, 206, 4, 145, 36, '#444', 'зона Југ'],
  ['D', 645, 285, 5, 156, 32, '#6b4f7a', 'Новкабел', 'italic'],
  ['D', 1094, 71, 4, 240, 36, '#444', 'Видовданск'],
  ['D', 1107, 114, 4, 150, 36, '#444', 'насеље'],
  ['D', 1072, 433, 72, 248, 29, '#222', 'Сентандрејски пут'],
  ['D', 772, 702, -29, 184, 29, '#222', 'Партизанска'],
  ['D', 426, 736, 43, 163, 29, '#222', 'Руменачка'],
  ['D', 398, 932, 6, 224, 36, '#444', 'Детелинара'],
  ['D', 852, 938, 6, 166, 36, '#444', 'Банатић'],
  ['D', 1040, 853, 4, 186, 33, '#4c5ab5', 'Нови Сад', 'bold'],
  ['D', 696, 1033, 48, 165, 29, '#222', 'Руменачка'],
  ['D', 789, 1125, 48, 46, 29, '#222', 'Хај'],
  ['D', 1176, 1127, 68, 90, 29, '#222', 'Булева'],
];
const SHIELDS = [
  [2008, 54, 98, 48, '100', '#f1f1d6', '#c7c9a0', '#5c5c3e'],
  [1058, 1325, 87, 52, '111', '#f1f1d6', '#c7c9a0', '#5c5c3e'],
  [2118, 1674, 79, 52, '12', '#fbe8d2', '#dcb493', '#6b4f38'],
];

const Tiles = ({ data, render }) =>
  Object.keys(data).map((k) => <g key={k} transform={TILES[k]}>{data[k].map(render)}</g>);

const CANAL = 'M30 470L250 533L520 632L760 716L1000 800L1200 870L1370 925L1650 1015L1740 1042L1860 1083L2000 1080Q2060 1090 2065 1120Q2080 1180 2170 1225L2379 1285V1325L2130 1235L1970 1170L1710 1082L1590 1040L1370 965L1170 905L1000 852L760 765L520 672L250 580L30 508Z';

function Marker({ x, y, s }) {
  return (
    <g transform={`translate(${x} ${y}) scale(${s})`}>
      <ellipse cx="34" cy="-26" rx="44" ry="13" fill="#333" opacity=".28" transform="rotate(-38 34 -26)" />
      <path d="M0 0Q-10 -28 -30 -48Q-42 -60 -42 -74Q-40 -111 0 -112Q40 -111 42 -74Q42 -60 30 -48Q10 -28 0 0Z" fill="url(#pinBlue)" stroke="#2569a6" strokeWidth="3" />
      <ellipse cy="-78" rx="16" ry="13" fill="#fff" />
    </g>
  );
}

function MapDrawing({ w, h, label, faded }) {
  const names = faded ? NAMES.filter((n) => n[9]) : NAMES;
  const shields = faded ? SHIELDS.slice(0, 1) : SHIELDS;
  return (
    <MapSvg $w={w} $h={h} viewBox="30 15 2349 2256" preserveAspectRatio="none" role="img" aria-label={label}>
      <defs>
        <pattern id="homes" width="26" height="21" patternUnits="userSpaceOnUse" patternTransform="rotate(22)">
          <path d="M1 2h7v5h-7zM14 1h5v7h-5zM3 13h5v5h-5zM16 13h7v4h-7z" fill="#c3b0a3" fillOpacity=".6" />
        </pattern>
        <pattern id="marsh" width="64" height="46" patternUnits="userSpaceOnUse">
          <path d="M2 6h18M30 12h16M10 24h14M44 28h16M20 40h18M50 42h10" stroke="#52a9e2" strokeWidth="3" />
          <path d="M30 30v-12M26 30l-4-9M34 30l4-9" stroke="#74b96c" strokeWidth="2" />
        </pattern>
        <pattern id="graves" width="12" height="9" patternUnits="userSpaceOnUse" patternTransform="rotate(4)">
          <path d="M0 2h9M3 2v5" stroke="#f2836f" strokeWidth="1.600" />
        </pattern>
        <pattern id="tufts" width="110" height="84" patternUnits="userSpaceOnUse" patternTransform="rotate(14)">
          <path d="M20 30h18M29 30v-12M27 30l-7-8M31 30l7-8M75 70h18M84 70v-12M82 70l-7-8M86 70l7-8" stroke="#9fb77c" strokeWidth="2.500" />
        </pattern>
        <marker id="pylon" markerWidth="8" markerHeight="8" refX="4" refY="4" markerUnits="userSpaceOnUse">
          <rect x="1" y="1" width="6" height="6" fill="#bbb" stroke="#666" strokeWidth="1.800" />
        </marker>
        <path id="partisan" d="M242 280Q300 310 400 352T640 432T812 482" />
        <linearGradient id="pinBlue" x1="0" x2="0" y1="0" y2="1">
          <stop offset="0" stopColor="#3289c8" />
          <stop offset="1" stopColor="#1c74c4" />
        </linearGradient>
      </defs>
      <rect x="30" y="15" width="2349" height="2256" fill={FARM} />
      <path d="M560 660L1200 870V930L1080 897L900 850L620 745Z" fill={WOOD} />
      <Tiles data={LAND} render={([fill, d], i) => <path key={i} d={d} fill={fill} />} />
      <Tiles data={BLOCKS} render={(d, i) => <path key={i} d={d} fill="url(#homes)" />} />
      <path d="M30 450L260 515L500 605L520 690L200 567L30 522Z" fill={WOOD} />
      <path d={CANAL} fill={WATER} />
      <g transform={TILES.C}>
        <path d="M860 500L1000 360L1010 400L970 465L915 560L850 550L800 740L690 680L650 800L570 935L480 860L640 700Z" fill="url(#marsh)" />
        <path d="M1060 370L1180 330L1110 470L1060 500L1010 450ZM30 550L65 540L75 590L150 590L200 570L215 640L90 710L30 690ZM330 760L360 760L300 880H200L240 810Z" fill="url(#marsh)" />
        <path d="M850 550L930 570L1030 610L1110 790L850 855L900 985L570 940L625 810L690 680L800 745Z" fill="url(#tufts)" />
        <path d="M585 170L690 190L700 230L690 300L565 310V250ZM665 145L690 150L685 180L660 175ZM690 110L770 100L760 190L710 180ZM800 110L900 210L935 240L870 300L770 200ZM690 235L790 250V310H690ZM510 310L545 300L575 345L575 390L530 390ZM665 310L740 330L745 390L690 410ZM760 330L845 345L845 380L760 390ZM818 305L888 303L886 350L822 345ZM575 385L610 370L650 410L620 440L580 420Z" fill="url(#graves)" />
      </g>
      <g transform={TILES.D}>
        <path d="M915 250L975 205L1020 350L920 355Z" fill="url(#graves)" opacity=".6" />
        <path d="M180 305L260 325L330 370L520 520L600 625L520 605L380 500L260 390Z" fill="#b9b4b8" />
      </g>
      {STREAMS.map((d) => <path key={d} d={d} fill="none" stroke="#9fcfe6" strokeWidth="5" />)}
      <g fill="none" strokeWidth="3" strokeDasharray="12 6 3 6">
        {TRACKS.map(([c, d]) => <path key={c} d={d} stroke={c} />)}
      </g>
      <g fill="none" strokeLinecap="round" strokeLinejoin="round">
        <Tiles data={MINOR} render={(d, i) => <path key={i} d={d} stroke="#cfccca" strokeWidth="8.500" />} />
        <Tiles data={MINOR} render={(d, i) => <path key={i} d={d} stroke="#fff" strokeWidth="6.200" />} />
        <Tiles data={MAJOR_WHITE} render={(d, i) => <path key={i} d={d} stroke="#bcb9b8" strokeWidth="14" />} />
        <Tiles data={MAJOR_WHITE} render={(d, i) => <path key={i} d={d} stroke="#fff" strokeWidth="10.500" />} />
        <g stroke="#8a8a8a" strokeWidth="3.600">{SIDINGS.map((d) => <path key={d} d={d} />)}</g>
        {YELLOW.map((d) => <path key={d} d={d} stroke="#c9cc92" strokeWidth="21" />)}
        {YELLOW.map((d) => <path key={d} d={d} stroke="#f7fabf" strokeWidth="16" />)}
        <path d={PRIMARY} stroke="#d9a978" strokeWidth="22" />
        <path d={PRIMARY} stroke="#fcd6a4" strokeWidth="17" />
        <path d="M1320 15V45" stroke="#f9a08f" strokeWidth="20" strokeLinecap="butt" />
        <circle cx="1152" cy="1025" r="17" fill="#f7fabf" stroke="#c9cc92" strokeWidth="3" />
        <circle cx="1247" cy="760" r="17" fill="#f7fabf" stroke="#c9cc92" strokeWidth="3" />
      </g>
      <g fill="none">
        {RAILS.map((d) => <path key={d} d={d} stroke="#6f6f6f" strokeWidth="9.500" />)}
        {RAILS.map((d) => <path key={d} d={d} stroke="#c9c9c9" strokeWidth="3.500" strokeDasharray="20 20" />)}
        <path d="M155 15L275 240L375 430L470 600" stroke="#747474" strokeWidth="8" strokeDasharray="7 3" />
        <path d="M470 600L518 685" stroke="#555" strokeWidth="24" />
        <path d="M470 600L518 685" stroke="#fff" strokeWidth="17" />
        <path d="M470 600L518 685Q600 810 680 880" stroke="#747474" strokeWidth="8" strokeDasharray="7 8" />
        <path d="M545 645L575 690M553 640L582 685" stroke="#444" strokeWidth="4" />
        <path d="M1300 1050L1600 1130L1960 1210L2150 1265L2379 1325" stroke="#a9a9a9" strokeWidth="8" />
        <path d="M1300 1050L1600 1130L1960 1210L2150 1265L2379 1325" stroke="#eee" strokeWidth="4" strokeDasharray="16 16" />
        <path d="M2144 1190L2180 1290M2165 1180L2200 1285M1177 1040L1215 900M1125 1085L1070 1270M1145 1085L1090 1270" stroke="#444" strokeWidth="3" strokeDasharray="9 4" />
      </g>
      <g fill="none" stroke="#8e8e8e" strokeWidth="2.200">
        {POWER.map((d) => <path key={d} d={d} markerStart="url(#pylon)" markerMid="url(#pylon)" markerEnd="url(#pylon)" />)}
      </g>
      <path d="M1630 1025L1655 1040L1675 1020L1672 1050L1650 1048Z" fill="#777" />
      <rect x="2370" y="38" width="10" height="36" fill="#0092da" />
      <rect x="2197" y="1873" width="22" height="17" fill="#7981b0" />
      <g stroke="#fff" strokeOpacity=".75" strokeLinejoin="round" paintOrder="stroke">
        {names.map(([tile, x, y, r, len, size, fill, text, kind], i) => (
          <g key={i} transform={TILES[tile]}>
            <text
              transform={`translate(${x} ${y}) rotate(${r})`}
              textAnchor="middle"
              textLength={len}
              lengthAdjust="spacingAndGlyphs"
              fontSize={size}
              fill={fill}
              strokeWidth={size > 30 ? 7 : 2}
              fontStyle={kind === 'italic' ? 'italic' : 'normal'}
              fontWeight={kind === 'bold' ? 700 : size > 30 ? 500 : 400}
            >
              {text}
            </text>
          </g>
        ))}
        {!faded && (
          <g transform={TILES.D}>
            <text fontSize="28" fill="#222" strokeWidth="4">
              <textPath href="#partisan" textLength="600" lengthAdjust="spacingAndGlyphs">Пут новосадског партизанског одреда</textPath>
            </text>
          </g>
        )}
      </g>
      {shields.map(([x, y, bw, bh, text, bg, line, ink]) => (
        <g key={text}>
          <rect x={x - bw / 2} y={y - bh / 2} width={bw} height={bh} rx="6" fill={bg} stroke={line} strokeWidth="3.500" />
          <text x={x} y={y + 11} textAnchor="middle" fontSize="30" fontWeight="600" textLength={text.length * 20} lengthAdjust="spacingAndGlyphs" fill={ink}>{text}</text>
        </g>
      ))}
      <Marker x={1754} y={1077} s={1.02} />
      <Marker x={1038} y={1477} s={0.95} />
      <g>
        <rect x="62" y="35" width="89" height="156" rx="7" fill="#fff" stroke="#b9bba8" strokeWidth="4" />
        <path d="M64 111H149" stroke="#ccc" strokeWidth="3" />
        <path d="M91 74H123M107 59V89M91 152H125" stroke="#000" strokeWidth="6" />
      </g>
    </MapSvg>
  );
}

export default function App() {
  return (
    <>
      <GlobalStyle />
      <Stage>
        <Backdrop aria-hidden="true">
          <BackdropSide>
            <BackdropLogo><Logo w={184} h={68} /></BackdropLogo>
          </BackdropSide>
          <BackdropMap><MapDrawing w={1355} h={1301} label="Faded map" faded /></BackdropMap>
        </Backdrop>
        <Content>
          <Header><Logo w={363} h={150} /></Header>
          <Columns>
            <Previews>
              <Panel $width={530} $height={322} $pad="44px 0 0 49px">
                <List><Workouts /></List>
              </Panel>
              <Panel $width={529} $height={250} $pad="12px 0 0 16px">
                <PanelLogo><Logo w={156.5} h={63} /></PanelLogo>
                <FormCard>
                  <Label $track={0.1}>Type</Label>
                  <Select>
                    <span>Cyclin</span>
                    <svg width="12" height="10" viewBox="0 0 12 10"><path d="M1.500 2.500L6 7L10.500 2.500" fill="none" stroke="#1c1f21" strokeWidth="2.400" /></svg>
                  </Select>
                  <Label $track={0.5}>Distance</Label>
                  <Field $active>km</Field>
                  <Label $track={0.7}>Duration</Label>
                  <Field>min</Field>
                  <Label $track={0.35}>Elev Gain</Label>
                  <Field>meters</Field>
                </FormCard>
              </Panel>
            </Previews>
            <Showcase>
              <Sidebar>
                <SidebarLogo><Logo w={106.5} h={42} /></SidebarLogo>
                <TiltedList><Workouts /></TiltedList>
              </Sidebar>
              <MapFrame><MapDrawing w={783} h={752} label="Map of Novi Sad" /></MapFrame>
            </Showcase>
          </Columns>
        </Content>
      </Stage>
    </>
  );
}
